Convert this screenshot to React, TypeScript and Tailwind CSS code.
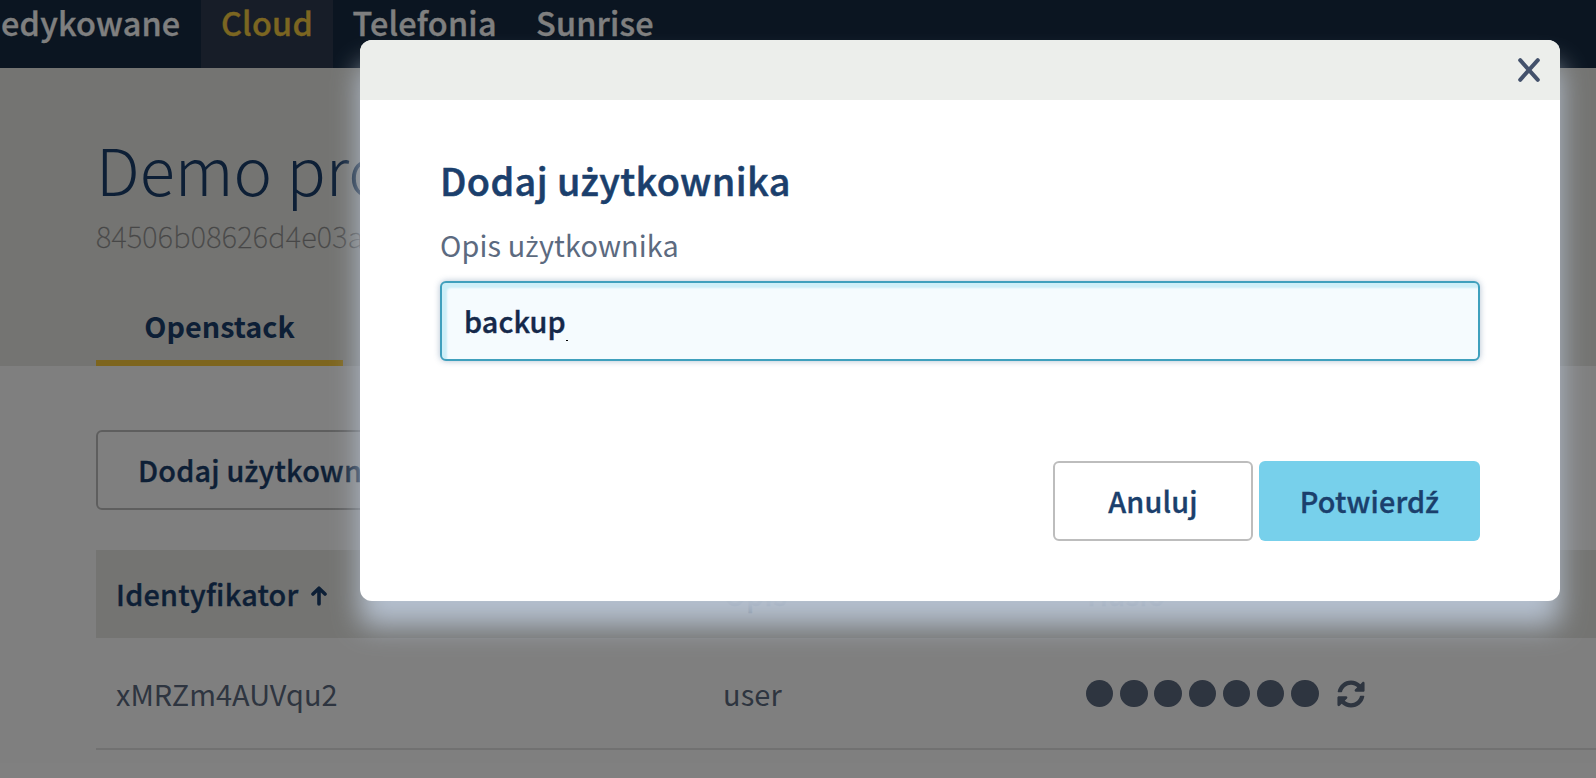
import { FaSyncAlt } from "react-icons/fa";

const NAV = ["edykowane", "Cloud", "Telefonia", "Sunrise"];

function Z({ c = "ż", className = "font-semibold" }: { c?: string; className?: string }) {
  return <span className={`font-['Open_Sans','Noto_Sans',sans-serif] leading-none ${className}`}>{c}</span>;
}

function Nav() {
  return (
    <nav className="flex h-[68px] bg-[#172b42] text-[32.4px] leading-[44px] font-medium tracking-[0.2px] text-white [-webkit-text-stroke:0.3px]">
      {NAV.map((item) => (
        <span
          key={item}
          className={
            item === "Cloud"
              ? "w-[132px] shrink-0 bg-[#2e3a50] pl-[20px] text-[#f7cc43]"
              : item === "edykowane"
                ? "w-[201px] shrink-0 pl-[1px]"
                : item === "Telefonia"
                  ? "w-[183px] shrink-0 pl-[19.5px]"
                  : "pl-[20px]"
          }
        >
          {item}
        </span>
      ))}
    </nav>
  );
}

function Page() {
  return (
    <div className="h-[778px] w-[1596px] overflow-hidden bg-white">
      <Nav />
      <header className="flex h-[298px] flex-col bg-[#e8e8e4] pl-[96px]">
        <h1 className="mt-[55px] h-[90px] text-[65px] leading-[90px] font-light text-[#1b3f6c]">Demo project</h1>
        <p className="mt-[1px] h-[42px] text-[29.1px] leading-[42px] font-thin tracking-[0.3px] text-[#8f8f8f] [-webkit-text-stroke:0.3px]">
          84506b08626d4e03a1f2
        </p>
        <div className="mt-auto h-[66px] w-[247px] border-b-6 border-[#fbca3d] text-center text-[28.8px] leading-[52px] font-bold text-[#1b3f6c]">
          Openstack
        </div>
      </header>
      <main className="pl-[96px]">
        <button className="mt-[64px] block h-[80px] w-[340px] rounded-[6px] border-2 border-[#bdbdbd] pl-[40px] text-left text-[28.8px] leading-[76px] font-medium tracking-[0.2px] text-[#1b3f6c] [-webkit-text-stroke:0.35px]">
          Dodaj u<Z />ytkownika
        </button>
        <div className="mt-[40px] grid h-[88px] grid-cols-[608px_363px_1fr] bg-[#e8e8e4] pl-[20px] text-[28.8px] leading-[88px] font-medium tracking-[0.25px] text-[#1b3f6c] [-webkit-text-stroke:0.35px]">
          <span className="flex items-center">
            Identyfikator
            <svg className="mt-[4px] ml-[12px] h-[20px] w-[16px]" viewBox="0 0 16 20" fill="none" stroke="currentColor" strokeWidth="3.6" strokeLinecap="round" strokeLinejoin="round">
              <path d="M8 18V3M2 8L8 2.2L14 8" />
            </svg>
          </span>
          <span>Opis</span>
          <span>Hasło</span>
        </div>
        <div className="grid h-[112px] grid-cols-[607px_363px_1fr] border-b-2 border-[#e3e3e3] pl-[20px] text-[28.9px] leading-[111px] text-[#5c6a80]">
          <span>xMRZm4AUVqu2</span>
          <span className="tracking-[0.15px]">user</span>
          <span className="flex h-[111px] items-center gap-[6.8px]">
            {[0, 1, 2, 3, 4, 5, 6].map((i) => (
              <i key={i} className="size-[27.4px] rounded-full bg-current" />
            ))}
            <FaSyncAlt className="ml-[12px] size-[28px]" />
          </span>
        </div>
      </main>
    </div>
  );
}

function Modal() {
  return (
    <div className="h-[561px] w-[1200px] rounded-[12px] bg-white shadow-[0_25px_28px_0_rgb(181,192,207)]">
      <div className="flex h-[60px] justify-end rounded-t-[12px] bg-[#eceeeb]">
        <svg className="mt-[18px] mr-[20px] h-[24px] w-[22px]" viewBox="0 0 22 24" fill="none" stroke="#43516b" strokeWidth="4" strokeLinecap="round">
          <path d="M2.2 2.2L19.8 21.8M19.8 2.2L2.2 21.8" />
        </svg>
      </div>
      <div className="px-[80px] pt-[55px]">
        <h2 className="h-[50px] text-[37.8px] leading-[50px] font-medium tracking-[0.38px] text-[#1b3f6c] [-webkit-text-stroke:0.55px]">
          Dodaj u<Z />ytkownika
        </h2>
        <label className="mt-[18px] block h-[44px] text-[28.8px] leading-[44px] tracking-[0.12px] text-[#5c6a80]">
          Opis u<Z className="font-normal" />ytkownika
        </label>
        <div className="mt-[14px] flex h-[80px] rounded-[6px] border-2 border-[#3fa0bd] bg-[#f5fbfe] pl-[22px] text-[28.8px] leading-[76px] font-medium text-[#14284a] shadow-[inset_5px_5px_2px_#cdeff8,0_0_6px_rgba(63,100,140,0.4)]">
          <span className="tracking-[0.1px] [-webkit-text-stroke:0.4px]">backup</span>
          <i className="mt-[57px] h-px w-[2px] bg-black" />
        </div>
        <div className="mt-[100px] flex justify-end gap-[6px] text-[28.8px] font-medium tracking-[0.15px] text-[#1b3f6c] [-webkit-text-stroke:0.35px]">
          <button className="h-[80px] w-[200px] rounded-[6px] border-2 border-[#bdbdbd] leading-[76px]">Anuluj</button>
          <button className="h-[80px] w-[221px] rounded-[6px] bg-[#77d0eb] leading-[80px]">
            Potwierd<Z c="ź" />
          </button>
        </div>
      </div>
    </div>
  );
}

export default function App() {
  return (
    <div className="relative h-[778px] w-[1596px] overflow-hidden font-['Noto_Sans_CJK_SC','Noto_Sans',sans-serif] whitespace-nowrap">
      <Page />
      <div className="absolute inset-0 bg-black/50 pt-[40px] pl-[360px]">
        <Modal />
      </div>
    </div>
  );
}
